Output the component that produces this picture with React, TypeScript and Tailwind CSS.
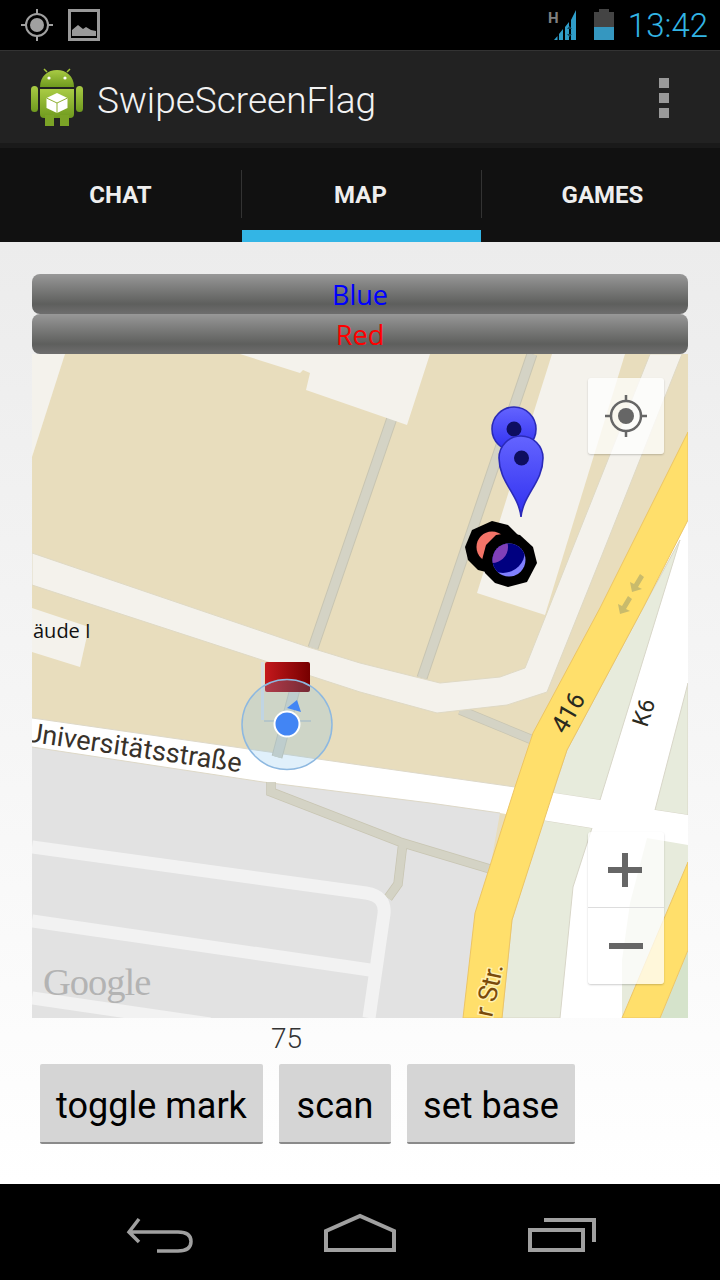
const GRAY = "#e2e2e2";
const BEIGE = "#e8ddbd";
const ROAD = "#f4f2ec";
const PARK = "#e7ebdc";
const YELLOW = "#ffdf6b";
const PATH = "#d4d3c5";
const PATH_EDGE = "#c8c5b2";

function StatusBar() {
  return (
    <div className="h-[50px] bg-black flex items-center pl-[20px] pr-[12px] shrink-0">
      <svg width="34" height="34" viewBox="0 0 34 34" fill="none" stroke="#a0a0a0">
        <circle cx="17" cy="17" r="11" strokeWidth="2" />
        <circle cx="17" cy="17" r="7" fill="#a0a0a0" stroke="none" />
        <path d="M17 1v5M17 28v5M1 17h5M28 17h5" strokeWidth="2" />
      </svg>
      <svg width="34" height="34" viewBox="0 0 34 34" className="ml-[13px]" fill="none">
        <rect x="2.5" y="2.5" width="29" height="29" stroke="#999" strokeWidth="3" />
        <path d="M5 28v-6l6-5 5 4 3-2 5 3 5 1v5z" fill="#999" />
      </svg>
      <div className="flex-1" />
      <svg width="36" height="34" viewBox="0 0 36 34" className="mr-[10px]">
        <text x="0" y="15" fontFamily="Roboto, sans-serif" fontWeight="700" fontSize="15" fill="#808080">H</text>
        <path d="M6 32l3.5-4V32zM11 32v-6l4-5V32zM17 32V19l4-5V32zM23 32V12l5-10V32z" fill="#2f9dc9" />
        <path d="M19 21l2.5-3 2.5 3zM19 26l2.5 3 2.5-3z" fill="#12465c" />
      </svg>
      <div className="w-[20px] h-[31px] mr-[14px] -mt-[2px] flex flex-col items-center">
        <div className="w-[10px] h-[3px] bg-[#444]" />
        <div className="w-[20px] h-[15px] bg-[#444]" />
        <div className="w-[20px] h-[13px] bg-[#3597c0]" />
      </div>
      <span className="text-[33px] leading-none text-[#33b5e5] font-[Roboto] font-light">13:42</span>
    </div>
  );
}

function AndroidIcon() {
  return (
    <svg width="56" height="60" viewBox="0 0 56 60">
      <defs>
        <linearGradient id="droid" x1="0" y1="0" x2="0" y2="1">
          <stop offset="0" stopColor="#a9cb44" />
          <stop offset="1" stopColor="#6f9a1e" />
        </linearGradient>
      </defs>
      <path d="M18 5l-3-3M38 5l3-3" stroke="#a4c639" strokeWidth="1.5" />
      <path d="M11 20C11 9 19 3 28 3s17 6 17 17z" fill="url(#droid)" />
      <circle cx="20" cy="11" r="1.6" fill="#fff" />
      <circle cx="36" cy="11" r="1.6" fill="#fff" />
      <path d="M11 22h34v25a4 4 0 0 1-4 4H15a4 4 0 0 1-4-4z" fill="url(#droid)" />
      <rect x="2" y="19" width="7" height="26" rx="3.5" fill="url(#droid)" />
      <rect x="47" y="19" width="7" height="26" rx="3.5" fill="url(#droid)" />
      <rect x="16" y="48" width="9" height="11" fill="#7ba326" />
      <rect x="31" y="48" width="9" height="11" fill="#7ba326" />
      <path d="M28 26l10.500 5v10l-10.500 5-10.500-5V31z" fill="#fff" />
      <path d="M17.500 31l10.500 5 10.500-5M28 36v10" stroke="#8fb032" strokeWidth="1" fill="none" />
    </svg>
  );
}

function ActionBar() {
  return (
    <div className="h-[98px] shrink-0 bg-[#222222] border-t border-[#333] border-b-[5px] border-b-[#1a1a1a] flex items-center pl-[29px] pr-[51px]">
      <AndroidIcon />
      <span className="ml-[12px] mt-[6px] text-[37px] leading-none text-[#f2f2f2] font-[Roboto] font-light">SwipeScreenFlag</span>
      <div className="flex-1" />
      <div className="flex flex-col gap-[5px] mt-[2px]">
        <div className="w-[10px] h-[10px] bg-[#999]" />
        <div className="w-[10px] h-[10px] bg-[#999]" />
        <div className="w-[10px] h-[10px] bg-[#999]" />
      </div>
    </div>
  );
}

function Tab({ label, width, active }: { label: string; width: string; active?: boolean }) {
  return (
    <div className={`${width} relative flex items-center justify-center pb-[1px]`}>
      <span className="text-[24px] leading-none text-[#eeeeee] font-[Roboto] font-bold">{label}</span>
      {active && <div className="absolute left-0 right-0 bottom-0 h-[12px] bg-[#33b5e5]" />}
    </div>
  );
}

function Tabs() {
  return (
    <div className="h-[94px] shrink-0 bg-[#111111] flex items-stretch">
      <Tab label="CHAT" width="w-[241px]" />
      <div className="w-[1px] h-[48px] mt-[22px] bg-[#333]" />
      <Tab label="MAP" width="w-[239px] pr-[2px]" active />
      <div className="w-[1px] h-[48px] mt-[22px] bg-[#333]" />
      <Tab label="GAMES" width="w-[238px] pl-[3px]" />
    </div>
  );
}

function TeamButton({ label, color }: { label: string; color: string }) {
  return (
    <div
      className={`h-[40px] rounded-[8px] bg-linear-to-b from-[#989898] via-[#5e5f5d] via-75% to-[#6e6e6e] flex items-center justify-center text-[27px] leading-none font-['Open_Sans'] ${color}`}
    >
      {label}
    </div>
  );
}

function MapCanvas() {
  return (
    <svg width="656" height="664" viewBox="32 354 656 664" className="block">
      <defs>
        <linearGradient id="pin" x1="0" y1="0" x2="0" y2="1">
          <stop offset="0" stopColor="#6464ff" />
          <stop offset="1" stopColor="#3030f0" />
        </linearGradient>
        <linearGradient id="flag" x1="0" y1="0" x2="1" y2="0">
          <stop offset="0" stopColor="#c4181c" />
          <stop offset="1" stopColor="#760000" />
        </linearGradient>
        <clipPath id="inner">
          <circle cx="509" cy="560" r="16.5" />
        </clipPath>
      </defs>

      <rect x="32" y="354" width="656" height="664" fill={BEIGE} />

      {/* gray campus block */}
      <path d="M32 747L263 782 430 803 500 813 463 1018H32z" fill={GRAY} />
      {/* right side parks */}
      <path d="M600 800L553 793 567 750 667 560 688 490V1018H500z" fill="#fff" />
      <path d="M600 800L553 793 567 750 643 608 680 540z" fill={PARK} stroke="#d8d6c8" />
      <path d="M655 810L688 683V815z" fill={PARK} stroke="#d8d6c8" />
      <path d="M542 820L592 828 573 887 560 1018H502L512 920z" fill={PARK} stroke="#d8d6c8" />
      <path d="M647 838L688 845V862L622 1018V960L630 903z" fill={PARK} />
      <path d="M660 1018L688 950V1018z" fill="#d5e3cb" />

      {/* Universitatsstrasse */}
      <path d="M32 718L360 765 515 787 600 800 655 810 688 815V843L592 828 542 820 500 813 430 803 263 782 32 747z" fill="#fff" />
      <path d="M32 718L360 765 515 787M32 747L263 782 430 803 500 813" fill="none" stroke="#ddd8c8" strokeWidth="1" />

      {/* footpaths */}
      <path d="M532 354L422 678M392 418L313 648M300 670L277 757" stroke={PATH_EDGE} strokeWidth="11" fill="none" />
      <path d="M532 354L422 678M392 418L313 648M300 670L277 757" stroke={PATH} strokeWidth="9" fill="none" />
      <path d="M460 710L535 741M271 782V792L400 842 500 872M403 842L398 884 388 898" stroke={PATH_EDGE} strokeWidth="9.500" fill="none" />
      <path d="M460 710L535 741M271 782V792L400 842 500 872M403 842L398 884 388 898" stroke={PATH} strokeWidth="8" fill="none" />

      {/* buildings */}
      <path d="M32 354H65L32 457z" fill={ROAD} />
      <path d="M240 354L300 373 303 370 310 373 306 390 407 425 430 354z" fill={ROAD} />
      <path d="M32 608L89 627 80 667 32 652z" fill={ROAD} />
      <path d="M552 354H625L545 615 477 593z" fill={ROAD} />

      {/* main service road */}
      <path
        d="M32 553L308 647 360 663 440 683 500 677 525 668 650 354H682L600 560 547 692 507 705 437 713 360 692 32 585z"
        fill={ROAD}
        stroke="#dfd9c4"
        strokeWidth="1"
      />

      {/* B road */}
      <path d="M688 432L600 608 533 733 515 787 475 913 463 1018H502L512 920 557 780 567 750 643 608 688 520z" fill={YELLOW} stroke="#ecc565" strokeWidth="1" />
      <path d="M688 862L622 1018H660L688 950z" fill={YELLOW} stroke="#ecc565" strokeWidth="1" />
      <path d="M640 574l-6 10-4-2 2 10 10-3-4-2 6-10zM628 596l-6 10-4-2 2 10 10-3-4-2 6-10z" fill="#c9bb6c" />

      {/* campus walkways */}
      <path d="M32 847L366 893Q386 896 384 914L369 1018" stroke="#f2f2f2" strokeWidth="13" fill="none" />
      <path d="M32 921L370 970" stroke="#f2f2f2" strokeWidth="13" fill="none" />
      <path d="M32 998L210 1024" stroke="#f2f2f2" strokeWidth="13" fill="none" />

      {/* labels */}
      <text transform="translate(24 741) rotate(8.2)" fontFamily="Roboto, sans-serif" fontSize="27" fill="#38322a">Universitätsstraße</text>
      <text x="33" y="638" fontFamily="Open Sans, sans-serif" fontSize="20" fill="#111">äude I</text>
      <text transform="translate(565 735) rotate(-60)" fontFamily="Roboto, sans-serif" fontSize="25" fill="#2a2a20">416</text>
      <text transform="translate(647 728) rotate(-72)" fontFamily="Roboto, sans-serif" fontSize="23" fill="#2a2a20">K6</text>
      <text
        transform="translate(492 1018) rotate(-78)"
        fontFamily="Roboto, sans-serif"
        fontSize="26"
        fill="#7a4a0a"
        stroke="#fff0b0"
        strokeWidth="3"
        paintOrder="stroke"
      >
        r Str.
      </text>
      <text x="43" y="995" fontFamily="Liberation Serif, serif" fontSize="38.500" letterSpacing="-1" fill="#b3b3b3">Google</text>

      {/* blue pins */}
      <circle cx="514" cy="429" r="22" fill="url(#pin)" stroke="#2a2ab8" strokeWidth="1.6" />
      <circle cx="514" cy="429" r="7.5" fill="#0e0e60" />
      <path d="M521 517C519 495 499 482 499 458a22 22 0 0 1 44 0C543 482 523 495 521 517z" fill="url(#pin)" stroke="#2a2ab8" strokeWidth="1.6" />
      <circle cx="521.5" cy="458" r="7.5" fill="#0e0e60" />

      {/* scan blobs */}
      <path d="M492 521L508 525 518 535 490 573 478 570 468 560 465 547 472 530z" fill="#000" />
      <circle cx="492" cy="547" r="15.500" fill="#f37468" />
      <path d="M485 573L495 583 508 587 527 582 537 563 533 547 520 535 508 533 496 535 486 545 482 560z" fill="#000" />
      <g clipPath="url(#inner)">
        <rect x="490" y="540" width="40" height="40" fill="#8080ff" />
        <circle cx="503" cy="551" r="22" fill="#000080" />
        <circle cx="492" cy="547" r="16" fill="#8040b8" />
      </g>

      {/* flag */}
      <rect x="261" y="662" width="3" height="58" fill="#d8dde0" />
      <rect x="265" y="662" width="45" height="30" rx="2" fill="url(#flag)" />
      <rect x="264" y="720" width="47" height="2" fill="#c8cabf" />

      {/* my location */}
      <circle cx="287" cy="724.5" r="45" fill="#73b9eb" fillOpacity="0.22" stroke="#8db8e0" strokeWidth="1.5" />
      <path d="M297 700L287 708 301 712z" fill="#4285f4" />
      <circle cx="287" cy="724" r="12.5" fill="#4285f4" stroke="#fff" strokeWidth="2" />
    </svg>
  );
}

function MapView() {
  return (
    <div className="relative h-[664px] overflow-hidden">
      <MapCanvas />
      <div className="absolute left-[556px] top-[24px] w-[76px] h-[76px] rounded-[3px] bg-white/75 shadow-[0_1px_2px_rgba(0,0,0,0.2)] flex items-center justify-center">
        <svg width="44" height="44" viewBox="0 0 44 44" fill="none" stroke="#666">
          <circle cx="22" cy="22" r="15" strokeWidth="2.5" />
          <circle cx="22" cy="22" r="8" fill="#666" stroke="none" />
          <path d="M22 1v6M22 37v6M1 22h6M37 22h6" strokeWidth="2.5" />
        </svg>
      </div>
      <div className="absolute left-[556px] top-[478px] w-[76px] h-[152px] rounded-[3px] bg-white/75 shadow-[0_1px_2px_rgba(0,0,0,0.2)] flex flex-col">
        <div className="h-[76px] flex items-center justify-center border-b border-[#ddd]">
          <svg width="34" height="34" viewBox="0 0 34 34" className="mr-[2px]">
            <path d="M14 0h6v14h14v6H20v14h-6V20H0v-6h14z" fill="#666" />
          </svg>
        </div>
        <div className="flex-1 flex items-center justify-center">
          <div className="w-[34px] h-[6px] bg-[#666]" />
        </div>
      </div>
    </div>
  );
}

function ActionButton({ label, width }: { label: string; width: string }) {
  return (
    <div className={`h-[80px] ${width} bg-[#d5d5d5] rounded-[2px] border-b-2 border-[#8a8a8a] pt-[6px] flex items-center justify-center text-[36px] leading-none text-black font-[Roboto]`}>
      {label}
    </div>
  );
}

function NavBar() {
  return (
    <div className="h-[96px] shrink-0 bg-black flex items-start">
      <svg width="720" height="96" viewBox="0 1184 720 96" fill="none" stroke="#a0a0a0" strokeWidth="4">
        <path d="M139 1219L129 1232 139 1242M129 1232H178Q191 1232 191 1241.500 191 1251 178 1251H157" strokeWidth="3.500" />
        <path d="M326 1250V1231L360 1216 394 1231V1250z" />
        <path d="M530 1230H583V1250H530zM544 1220H594V1242" />
      </svg>
    </div>
  );
}

export default function App() {
  return (
    <div className="w-[720px] h-[1280px] flex flex-col overflow-hidden bg-black">
      <StatusBar />
      <ActionBar />
      <Tabs />
      <div className="flex-1 bg-linear-to-b from-[#ececec] to-white pt-[32px] px-[32px]">
        <TeamButton label="Blue" color="text-[#0000ff]" />
        <TeamButton label="Red" color="text-[#ff0000]" />
        <MapView />
        <div className="h-[46px] pl-[239px] pt-[6px] text-[28px] leading-[30px] text-[#333] font-[Roboto] font-light">75</div>
        <div className="flex gap-[16px] ml-[8px]">
          <ActionButton label="toggle mark" width="w-[223px]" />
          <ActionButton label="scan" width="w-[112px]" />
          <ActionButton label="set base" width="w-[168px]" />
        </div>
      </div>
      <NavBar />
    </div>
  );
}
